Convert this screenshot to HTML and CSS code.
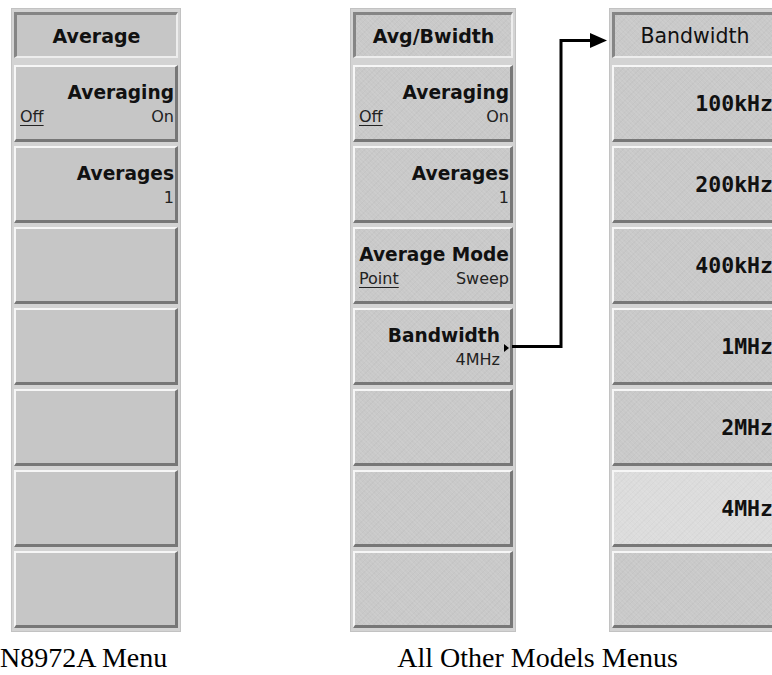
FILE: index.html
```html
<!DOCTYPE html>
<html>
  <head>
    <title>Average menus</title>
    <link rel="stylesheet" href="styles.css">
  </head>
  <body>
    <div class="page">
      <div class="menus">
        <!-- N8972A -->
        <div class="menu menu-left plain">
          <div class="menu-title">Average</div>
          <div class="key">
            <div class="key-label">Averaging</div>
            <div class="key-value"><span class="sel">Off</span><span>On</span></div>
          </div>
          <div class="key">
            <div class="key-label">Averages</div>
            <div class="key-value single"><span>1</span></div>
          </div>
          <div class="key"></div>
          <div class="key"></div>
          <div class="key"></div>
          <div class="key"></div>
          <div class="key"></div>
        </div>

        <!-- other models -->
        <div class="menu menu-mid textured">
          <div class="menu-title">Avg/Bwidth</div>
          <div class="key">
            <div class="key-label">Averaging</div>
            <div class="key-value"><span class="sel">Off</span><span>On</span></div>
          </div>
          <div class="key">
            <div class="key-label">Averages</div>
            <div class="key-value single"><span>1</span></div>
          </div>
          <div class="key">
            <div class="key-label">Average Mode</div>
            <div class="key-value"><span class="sel">Point</span><span>Sweep</span></div>
          </div>
          <div class="key more">
            <div class="key-label">Bandwidth</div>
            <div class="key-value single"><span>4MHz</span></div>
            <span class="submenu"></span>
          </div>
          <div class="key"></div>
          <div class="key"></div>
          <div class="key"></div>
        </div>

        <div class="menu menu-right textured">
          <div class="menu-title light">Bandwidth</div>
          <div class="key option"><span>100kHz</span></div>
          <div class="key option"><span>200kHz</span></div>
          <div class="key option"><span>400kHz</span></div>
          <div class="key option"><span>1MHz</span></div>
          <div class="key option"><span>2MHz</span></div>
          <div class="key option active"><span>4MHz</span></div>
          <div class="key"></div>
        </div>
      </div>

      <div class="captions">
        <span class="caption cap-left">N8972A Menu</span>
        <span class="caption cap-right">All Other Models Menus</span>
      </div>

      <!-- line from Bandwidth key to its submenu -->
      <svg class="connector" width="772" height="675" viewBox="0 0 772 675">
        <path d="M512 346.5 H561 V40.5 H592" fill="none" stroke="#000" stroke-width="3" />
        <polygon points="590,33 607,40.5 590,48" fill="#000" />
      </svg>
    </div>
  </body>
</html>
```

FILE: styles.css
```css
body {
  margin: 0;
  background-color: #fff;
  overflow: hidden;
}

.page {
  position: relative;
  width: 772px;
  height: 675px;
  overflow: hidden;
}

.menus {
  display: flex;
  align-items: flex-start;
  padding: 8px 0 0 11px;
}

.menu {
  box-sizing: border-box;
  display: flex;
  flex-direction: column;
  gap: 4px;
  padding: 3px 2px 3px 2px;
  background-color: #d3d3d3;
  border: 1px solid #c2c2c2;
  flex-shrink: 0;
}

.menu-left {
  width: 170px;
}

.menu-mid {
  width: 166px;
  margin-left: 169px;
}

.menu-right {
  width: 171px;
  margin-left: 93px;
}

.menu-title {
  box-sizing: border-box;
  height: 46px;
  margin-bottom: 3px;
  border-top: 3px solid #858585;
  border-left: 3px solid #858585;
  border-bottom: 2px solid #ededed;
  border-right: 2px solid #ededed;
  display: flex;
  align-items: center;
  justify-content: center;
  font-family: "DejaVu Sans", sans-serif;
  font-weight: bold;
  font-size: 19px;
  color: #111;
}

.menu-title.light {
  font-weight: normal;
  font-size: 20.5px;
}

.key {
  position: relative;
  box-sizing: border-box;
  height: 77px;
  padding: 16px 1px 0 4px;
  border-top: 2px solid #f6f6f6;
  border-left: 2px solid #f6f6f6;
  border-bottom: 3px solid #777;
  border-right: 3px solid #777;
  display: flex;
  flex-direction: column;
  text-align: right;
  color: #111;
}

.plain .menu-title,
.plain .key {
  background-color: #c6c6c6;
}

/* the scanned keys have a faint grain */
.textured .menu-title,
.textured .key {
  background-color: #c9c9c9;
  background-image:
    repeating-linear-gradient(45deg, rgba(255, 255, 255, 0.08) 0 1px, transparent 1px 3px),
    repeating-linear-gradient(-45deg, rgba(0, 0, 0, 0.025) 0 1px, transparent 1px 4px);
}

.key-label {
  font-family: "DejaVu Sans", sans-serif;
  font-weight: bold;
  font-size: 18.6px;
  line-height: 20px;
  white-space: nowrap;
}

.key-value {
  display: flex;
  justify-content: space-between;
  margin-top: 4px;
  font-family: "DejaVu Sans", sans-serif;
  font-size: 16px;
  line-height: 20px;
  color: #222;
}

.key-value.single {
  justify-content: flex-end;
}

.sel {
  text-decoration: underline;
  text-underline-offset: 3px;
}

.key.more {
  padding-right: 10px;
}

.submenu {
  position: absolute;
  right: 1px;
  top: 34px;
  width: 0;
  height: 0;
  border-left: 5px solid #000;
  border-top: 4px solid transparent;
  border-bottom: 4px solid transparent;
}

.key.option {
  padding: 0 1px 0 4px;
  justify-content: center;
  font-family: "DejaVu Sans Mono", monospace;
  font-weight: bold;
  font-size: 21.5px;
}

.textured .key.active {
  background-color: #dcdcdc;
}

.captions {
  display: flex;
  margin-top: 10px;
  font-family: "Liberation Serif", "Times New Roman", serif;
  font-size: 28px;
  line-height: 32px;
  color: #000;
}

.cap-left {
  margin-left: 0;
}

.cap-right {
  margin-left: 230px;
}

.connector {
  position: absolute;
  top: 0;
  left: 0;
  pointer-events: none;
}
```
